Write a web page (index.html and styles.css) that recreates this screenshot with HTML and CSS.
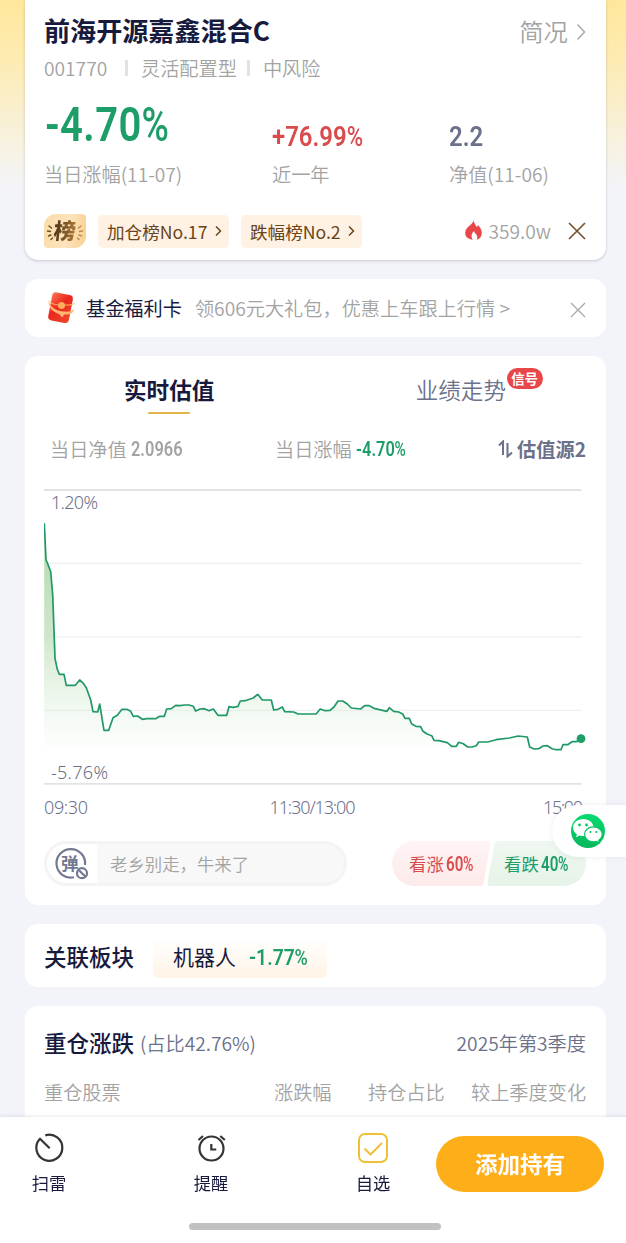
FILE: index.html
```html
<!DOCTYPE html>
<html lang="zh-CN">
<head>
    <meta charset="UTF-8">
    <meta name="viewport" content="width=device-width, initial-scale=1.0">
    <title>前海开源嘉鑫混合C</title>
    <link rel="stylesheet" href="styles.css">
</head>
<body>
    <main class="page">
        <section class="card fund">
            <div class="fund-head">
                <h1>前海开源嘉鑫混合C</h1>
                <div class="profile">简况
                    <svg width="10" height="18" viewBox="0 0 10 18"><path d="M1.5 1.5 8.5 9l-7 7.5" fill="none" stroke="#a9a9a9" stroke-width="1.5"/></svg>
                </div>
            </div>
            <div class="meta"><span class="code">001770</span><i></i><span>灵活配置型</span><i></i><span>中风险</span></div>
            <div class="stats">
                <div class="stat">
                    <div class="value"><span class="num num-big green">-4.70<small>%</small></span></div>
                    <div class="label">当日涨幅(11-07)</div>
                </div>
                <div class="stat">
                    <div class="value"><span class="num num-mid red">+76.99<small>%</small></span></div>
                    <div class="label">近一年</div>
                </div>
                <div class="stat">
                    <div class="value"><span class="num num-mid slate">2.2</span></div>
                    <div class="label">净值(11-06)</div>
                </div>
            </div>
            <div class="ranks">
                <div class="rank-logo">
                    <svg class="rays" width="42" height="34" viewBox="0 0 42 34" fill="none" stroke-width="1.4" stroke-linecap="round">
                        <path stroke="#6d4a20" d="m5 12 2.500 2M3.500 17l3 .5M4.500 22l2.500-1M7 25.500l1.500-1.500"/>
                        <path stroke="#bd8a49" d="m37 12-2.500 2M38.500 17l-3 .5M37.500 22l-2.500-1M35 25.500 33.500 24"/>
                    </svg>
                    <b>榜</b>
                </div>
                <div class="rank rank-up">加仓榜No.17
                    <svg width="7" height="12" viewBox="0 0 7 12"><path d="m1 1.500 4.500 4.500L1 10.500" fill="none" stroke="#6a4518" stroke-width="1.5"/></svg>
                </div>
                <div class="rank rank-down">跌幅榜No.2
                    <svg width="7" height="12" viewBox="0 0 7 12"><path d="m1 1.500 4.500 4.500L1 10.500" fill="none" stroke="#6a4518" stroke-width="1.5"/></svg>
                </div>
                <div class="heat">
                    <svg width="17" height="20" viewBox="0 0 17 20"><path fill="#e84648" d="M8.500.3c.5 3.400 2.300 4.400 3.200 6.700.8-.5 1-1.300 1.200-2.100 2.300 2.400 3.900 5 3.900 8 0 3.700-2.200 6-5.100 6.800 1-2 .7-4-.6-5.500-.9-1-1.800-1.700-2-3.200-1.700 1.300-2.100 2.600-2.400 3.800-.3 2 0 3.500 1.100 4.900C4 19.300.2 17.300.2 13c0-3 1.800-5 3.700-6.700C5.900 4.500 7.900 3.200 8.500.3z"/></svg>
                    <span>359.0w</span>
                </div>
                <svg class="close" width="18" height="18" viewBox="0 0 18 18"><path d="m1 1 16 16M17 1 1 17" stroke="#76532d" stroke-width="1.7"/></svg>
            </div>
        </section>

        <section class="card welfare">
            <svg class="packet" width="30" height="34" viewBox="0 0 30 34">
                <defs>
                    <linearGradient id="packet" x1="0" y1="0" x2="1" y2="1">
                        <stop offset="0" stop-color="#ff7654"/>
                        <stop offset=".45" stop-color="#e9281d"/>
                        <stop offset="1" stop-color="#ef4a2c"/>
                    </linearGradient>
                </defs>
                <g transform="rotate(11 15 17)">
                    <rect x="4" y="2.500" width="21" height="28.500" rx="4" fill="url(#packet)"/>
                </g>
                <path d="M2.500 9.500C4 16 9 19.500 17 20.500c6 .5 9.500-.5 11-2.500-.5 4.500-4.500 6-10 5.500l-1.500 3-3.500-3.500C7 21 2 16.500 2.500 9.500z" fill="#ffb574"/>
                <path d="M3 9.500c3 4 7 4.500 12 4.500 6 0 10 .5 13.500-1.500" fill="none" stroke="#ffbc69"/>
                <circle cx="15.500" cy="14.500" r="3.500" fill="#ffae5d"/>
            </svg>
            <span class="welfare-name">基金福利卡</span>
            <span class="welfare-text">领606元大礼包，优惠上车跟上行情 &gt;</span>
            <svg class="close" width="16" height="16" viewBox="0 0 16 16"><path d="m1 1 14 14M15 1 1 15" stroke="#a9a9a9" stroke-width="1.3"/></svg>
        </section>

        <section class="card trend">
            <div class="tabs">
                <div class="tab active">实时估值</div>
                <div class="tab">业绩走势<span class="signal">信号</span></div>
            </div>
            <div class="quote">
                <div>当日净值 <span class="num num-sm net">2.0966</span></div>
                <div class="quote-rate">当日涨幅 <span class="num num-sm rate green">-4.70<small>%</small></span></div>
                <div class="source">
                    <svg width="16" height="18" viewBox="0 0 16 18"><path d="m1 5.500 4-4V15M9.500 3v13.500l4.500-4" fill="none" stroke="#6b718a" stroke-width="2"/></svg>
                    估值源2
                </div>
            </div>
            <svg class="chart" width="544" height="336" viewBox="44 484 544 336">
                <defs>
                    <linearGradient id="area" gradientUnits="userSpaceOnUse" x1="0" y1="523" x2="0" y2="750">
                        <stop offset="0" stop-color="#acd9a6"/>
                        <stop offset=".5" stop-color="#c9e4c5" stop-opacity=".9"/>
                        <stop offset="1" stop-color="#e8f5e8" stop-opacity=".1"/>
                    </linearGradient>
                </defs>
                <path d="M44 563.300h537.500M44 636.800h537.500M44 710.300h537.500" stroke="#eeeff1" stroke-width="1.300"/>
                <path d="M44 490h537.500M44 783.800h537.500" stroke="#e2e3e5" stroke-width="1.800"/>
                <path id="area-shape" fill="url(#area)"/>
                <polyline id="line" fill="none" stroke="#219867" stroke-width="1.700" stroke-linejoin="round"/>
                <circle cx="581" cy="738.700" r="4.400" fill="#1d9d68"/>
                <g class="axis">
                    <text x="51" y="509" textLength="47">1.20%</text>
                    <text x="51" y="778.500" textLength="57">-5.76%</text>
                    <text x="44" y="813.500" textLength="44">09:30</text>
                    <text x="269.500" y="813.500" textLength="86">11:30/13:00</text>
                    <text x="543" y="813.500" textLength="40">15:00</text>
                </g>
            </svg>
            <div class="chat">
                <div class="danmu">
                    <div class="danmu-switch">
                        <svg width="36" height="34" viewBox="0 0 36 34" fill="none" stroke="#737991" stroke-width="2.200">
                            <path d="M20 30.300A14.300 14.300 0 1 1 31 18"/>
                            <circle cx="28" cy="26.200" r="5"/>
                            <path d="m24.700 23 6.600 6.500"/>
                            <text x="7" y="22.500">弹</text>
                        </svg>
                    </div>
                    <span>老乡别走，牛来了</span>
                </div>
                <div class="vote">
                    <svg class="vote-bg" width="194" height="45" viewBox="0 0 194 45">
                        <defs>
                            <linearGradient id="up" x2="0" y2="1"><stop stop-color="#fff4f4"/><stop offset="1" stop-color="#fdeaea"/></linearGradient>
                            <linearGradient id="down" x2="0" y2="1"><stop stop-color="#f0f7f0"/><stop offset="1" stop-color="#e6f3e8"/></linearGradient>
                        </defs>
                        <path d="M22.500 0H96q3 0 2.500 3l-7 39q-.5 3-3.500 3H22.500a22.500 22.500 0 0 1 0-45z" fill="url(#up)"/>
                        <path d="M106 0h65.500a22.500 22.500 0 0 1 0 45H98q-3 0-2.500-3l7-39q.5-3 3.500-3z" fill="url(#down)"/>
                    </svg>
                    <div class="red">看涨<span class="num num-vote">60<small>%</small></span></div>
                    <div class="green">看跌<span class="num num-vote">40<small>%</small></span></div>
                </div>
            </div>
        </section>

        <section class="card sector">
            <h2>关联板块</h2>
            <div class="sector-tag">机器人<span class="num num-sector green">-1.77<small>%</small></span></div>
        </section>

        <section class="card holdings">
            <div class="holdings-head">
                <h2>重仓涨跌</h2>
                <span class="ratio">(占比42.76%)</span>
                <span class="quarter">2025年第3季度</span>
            </div>
            <div class="columns">
                <span>重仓股票</span><span>涨跌幅</span><span>持仓占比</span><span>较上季度变化</span>
            </div>
        </section>
    </main>

    <div class="share">
        <svg width="34" height="34" viewBox="0 0 34 34">
            <defs><linearGradient id="wx" x2="0" y2="1"><stop stop-color="#08dc70"/><stop offset="1" stop-color="#07b65c"/></linearGradient></defs>
            <circle cx="17" cy="17" r="17" fill="url(#wx)"/>
            <path d="M12.300 5C6.500 5 2 8.800 2 13.600c0 2.800 1.500 5.200 3.900 6.700l-.8 3 3.500-1.800c1.200.4 2.400.6 3.700.6C18 22.100 22.500 18.400 22.500 13.600S18 5 12.300 5z" fill="#fff"/>
            <path d="M22.400 12.800c-4.900 0-8.800 3.300-8.800 7.500s3.900 7.500 8.800 7.500c1.100 0 2.100-.2 3-.5l3 1.500-.7-2.600c2.200-1.400 3.500-3.500 3.500-5.900 0-4.200-3.900-7.500-8.800-7.500z" fill="#fff" stroke="#07c865" stroke-width="1.200"/>
            <g fill="#07c865"><circle cx="8.500" cy="11" r="1.400"/><circle cx="15.500" cy="11" r="1.400"/><circle cx="19.500" cy="18" r="1.100"/><circle cx="25.300" cy="18" r="1.100"/></g>
        </svg>
    </div>

    <footer class="bottom">
        <nav>
            <div class="nav-item nav-scan">
                <svg width="32" height="32" viewBox="0 0 32 32" fill="none" stroke="#343434" stroke-width="2.200"><path d="M12.300 3.400A13 13 0 1 1 7 6.700l9.700 9.500" stroke-linejoin="round"/></svg>
                <span>扫雷</span>
            </div>
            <div class="nav-item nav-remind">
                <svg width="32" height="32" viewBox="0 0 32 32" fill="none" stroke="#343434" stroke-width="2.200"><circle cx="16.500" cy="16.500" r="12"/><path d="M16.300 12v5.500h5M3.500 8 8 4M29.800 8l-4.500-4"/></svg>
                <span>提醒</span>
            </div>
            <div class="nav-item nav-fav">
                <svg width="32" height="32" viewBox="0 0 32 32" fill="none" stroke="#efc037" stroke-width="2"><rect x="2" y="2" width="28" height="28" rx="6"/><path d="m7.500 16.500 6 6L25 11"/></svg>
                <span>自选</span>
            </div>
        </nav>
        <button class="add">添加持有</button>
        <div class="home-bar"></div>
    </footer>

    <script src="chart.js"></script>
</body>
</html>
```
FILE: chart.js
```js
// intraday estimate, x/y in chart units
const points = [
    [44.3,523.3],[46,560],[47.3,562.7],[50.7,571.7],[52.7,595],[55,658.3],[57.3,669.3],[59.3,674.3],[64,674.3],
    [66.3,685.3],[75.3,685.3],[79.7,680],[83.3,683.3],[86.3,687.7],[90.7,700],[93,711.7],[97.7,712],[99.7,704],
    [104,730.3],[108.7,730.3],[113,717.7],[117.3,715.3],[122,709.3],[126.7,709.3],[130.7,711.3],[133.3,716.3],
    [137.7,716],[142.3,719.3],[146.7,718.7],[155.7,718.7],[159.7,716.3],[164.3,716.3],[166.7,709],[171.3,708.7],
    [175.7,705.3],[180,705.7],[184.3,705],[189,705],[193.3,706.3],[195.7,711],[200,709],[204.3,708.7],[209,710.7],
    [213.3,709],[218,715.3],[226.7,715.3],[229,706.7],[233.3,707.3],[238,706.3],[240.3,701],[245,700.7],
    [253.3,698],[257.7,694.3],[262.3,700],[271.3,700],[273.7,710],[278,709.3],[282.3,707],[284.7,711.7],
    [293.7,712],[298,714],[316,714],[320.3,709],[325,710.7],[330,710.3],[334,707],[338,701],[342.7,701],
    [347.3,704],[351.3,708],[360.7,709],[364.7,705.7],[369.3,705.7],[374,708.3],[387,711.3],[389.3,707.7],
    [393.7,711.3],[398.7,712],[402.7,714],[405,718.3],[409.3,718.3],[411.7,724],[416,726.3],[420.7,726.7],
    [423,731.3],[427,734],[431.7,735.7],[434,740.3],[438.7,740.7],[447.3,742.7],[451.7,746.3],[456.3,746.3],
    [458.7,742.3],[463.3,743.7],[467.7,747],[472,747],[476.3,745.7],[478.7,742],[487.7,742],[496,739.7],
    [509.3,738],[518.3,736],[527.3,737],[529.7,747],[534,749],[538.7,748.7],[543,746],[547.3,745.7],[552,748.7],
    [556,749.7],[561,749.7],[563,744.7],[567.7,744.7],[572,741.7],[576.3,741.7],[581,738.7]
];

const line = points.map(p => p.join(',')).join(' ');
document.getElementById('line').setAttribute('points', line);
document.getElementById('area-shape').setAttribute('d', `M44,746 L${line} L581,746 Z`);
```
FILE: styles.css
```css
* {
    box-sizing: border-box;
}

body {
    margin: 0;
    height: 1243px;
    overflow: hidden;
    background: linear-gradient(#ffe79b 0, #fdebb2 60px, #f8f1d9 130px, #f3f4fa 190px) #f3f4fa;
    color: #171a3d;
    font-family: "Noto Sans CJK SC", sans-serif;
    font-size: 19.2px;
    font-weight: 350;
}

svg {
    display: block;
    flex: none;
}

h1,
h2 {
    margin: 0;
}

h2 {
    font-size: 22.5px;
    font-weight: 500;
    line-height: 30px;
    padding-bottom: 2px;
}

.page {
    width: 581px;
    margin-left: 24.5px;
    display: flex;
    flex-direction: column;
    gap: 19px;
}

.card {
    background: #fff;
    border-radius: 13px;
    padding: 0 19.5px;
}

.green { color: #1d9d68; }
.red { color: #d94c4e; }
.slate { color: #6b718a; }

/* condensed figures */
.num {
    display: inline-block;
    font-family: Roboto, sans-serif;
    font-weight: 600;
    white-space: nowrap;
    transform-origin: 0 50%;
}

.num small {
    display: inline-block;
    font-size: 1em;
    font-weight: 500;
    transform: scaleX(0.93);
    transform-origin: 0 50%;
}

/* Fund summary */
.fund {
    height: 260px;
    border-radius: 0 0 13px 13px;
    box-shadow: 0 1px 3px rgba(60, 65, 90, 0.25);
}

.fund-head {
    display: flex;
    justify-content: space-between;
    align-items: center;
    height: 50px;
    padding-top: 10px;
}

h1 {
    font-size: 26.1px;
    font-weight: 700;
    line-height: 38px;
}

.profile {
    display: flex;
    align-items: center;
    gap: 8px;
    font-size: 24.4px;
    color: #a3a3a3;
}

.profile svg {
    margin-top: 3px;
}

.meta {
    display: flex;
    align-items: center;
    height: 35px;
    margin-bottom: 2px;
    color: #a3a3a3;
}

.meta i {
    width: 3px;
    height: 16px;
    margin: 0 13px 0 10px;
    background: #e2e2e2;
}

.code {
    width: 71px;
}

.stats {
    display: grid;
    grid-template-columns: 228px 177px 1fr;
    height: 114px;
}

.value {
    display: flex;
    align-items: flex-end;
    height: 73px;
    line-height: 1;
}

.num-big {
    width: 124px;
    font-size: 48.5px;
    margin: 0 0 11px 1px;
    letter-spacing: 0.5px;
    transform: scaleX(0.825);
}

.num-mid {
    font-size: 28.5px;
    margin-bottom: 9px;
    transform: scaleX(0.84);
}

.label {
    line-height: 28px;
    color: #a3a3a3;
}

.ranks {
    display: flex;
    align-items: center;
    height: 60px;
}

.rank-logo {
    position: relative;
    width: 42px;
    height: 34px;
    border-radius: 12px 4px 12px 4px;
    background: linear-gradient(100deg, #fbdcaa 0, #fde4bd 55%, #f9cf90 100%);
    text-align: center;
}

.rays {
    position: absolute;
    inset: 0;
}

.rank-logo b {
    display: block;
    font-size: 22px;
    font-weight: 900;
    line-height: 31px;
    color: transparent;
    background: linear-gradient(90deg, #4e3519 25%, #ac7735 75%);
    background-clip: text;
    -webkit-background-clip: text;
    transform: skewX(-6deg);
}

.rank {
    display: flex;
    align-items: center;
    justify-content: space-between;
    height: 33px;
    margin-left: 12px;
    padding: 0 7px 0 9px;
    border-radius: 5px;
    background: #fff2e4;
    color: #6a4518;
    font-size: 17.6px;
    font-weight: 400;
}

.rank-up { width: 131px; }
.rank-down { width: 121px; }

.heat {
    display: flex;
    align-items: center;
    gap: 7px;
    margin-left: auto;
    color: #a3a3a3;
}

.heat svg {
    margin-bottom: 2px;
}

.ranks .close {
    margin-left: 17px;
}

/* Welfare notice */
.welfare {
    display: flex;
    align-items: center;
    height: 58px;
}

.packet {
    margin: 0 10px 0 2px;
}

.welfare-name {
    margin-right: 13px;
    font-weight: 400;
}

.welfare-text {
    color: #a3a3a3;
}

.welfare .close {
    margin: 4px 0 0 auto;
}

/* Estimate chart */
.trend {
    height: 549px;
}

.tabs {
    display: flex;
    justify-content: space-between;
    height: 70px;
    padding: 0 80px;
}

.tab {
    position: relative;
    font-size: 22.6px;
    line-height: 68px;
    color: #6b718a;
}

.tab.active {
    font-weight: 700;
    color: #171a3d;
}

.tab.active::after {
    content: "";
    position: absolute;
    left: 24px;
    bottom: 12px;
    width: 42px;
    height: 2px;
    border-radius: 2px;
    background: #dfb347;
}

.signal {
    position: absolute;
    left: 91px;
    top: 12px;
    width: 36px;
    height: 21px;
    border-radius: 11px;
    background: #e84648;
    color: #fff;
    font-size: 13.5px;
    font-weight: 700;
    line-height: 20px;
    text-align: center;
}

.quote {
    display: grid;
    grid-template-columns: 225px 1fr auto;
    align-items: center;
    height: 46px;
    padding-left: 6px;
    color: #a3a3a3;
}

.num-sm {
    position: relative;
    top: -1.5px;
    font-size: 20px;
    transform: scaleX(0.82);
}

.source {
    display: flex;
    align-items: center;
    gap: 3px;
    color: #6b718a;
    font-weight: 700;
}

.chart {
    margin-top: 12px;
}

.axis text {
    font-family: "Noto Sans", sans-serif;
    font-size: 18px;
    font-weight: 350;
    fill: #6b718a;
}

.chat {
    display: flex;
    justify-content: space-between;
    margin-top: 21px;
    font-size: 17.4px;
}

.danmu {
    display: flex;
    align-items: center;
    gap: 13px;
    width: 303px;
    height: 45px;
    overflow: hidden;
    border: 3px solid #f4f4f4;
    border-radius: 23px;
    background: #f8f8f8;
    color: #a3a3a3;
}

.danmu-switch {
    width: 50px;
    height: 40px;
    padding: 3px 0 0 7px;
    background: #fff;
}

.danmu-switch text {
    font-size: 17.5px;
    font-weight: 700;
    fill: #737991;
    stroke: none;
}

.vote {
    position: relative;
    display: flex;
    width: 194px;
    line-height: 45px;
    font-weight: 400;
}

.vote-bg {
    position: absolute;
    inset: 0;
}

.vote > div {
    position: relative;
    width: 95px;
    padding-left: 17px;
    white-space: nowrap;
}

.num-vote {
    margin-left: 2px;
    font-size: 20.5px;
    line-height: 1;
    transform: scaleX(0.74);
}

/* Related sector */
.sector {
    display: flex;
    align-items: center;
    gap: 19px;
    height: 63px;
}

.sector h2 {
    padding: 1px 0 0;
}

.sector-tag {
    width: 174px;
    height: 41px;
    margin-top: 3px;
    padding-left: 20px;
    border-radius: 5px;
    background: linear-gradient(#fff, #fff4e6);
    font-size: 21px;
    font-weight: 400;
    line-height: 38px;
    white-space: nowrap;
}

.num-sector {
    margin-left: 13px;
    font-size: 22.5px;
    line-height: 1;
    transform: scaleX(0.86);
}

/* Holdings */
.holdings {
    height: 130px;
}

.holdings-head {
    display: flex;
    align-items: center;
    height: 73px;
    color: #6b718a;
}

.holdings-head h2 {
    color: #171a3d;
}

.ratio {
    margin-left: 6px;
}

.quarter {
    margin-left: auto;
}

.columns {
    display: grid;
    grid-template-columns: 230px 94px 103px 1fr;
    line-height: 26px;
    color: #a3a3a3;
    white-space: nowrap;
}

/* Floating share tab */
.share {
    position: fixed;
    top: 805px;
    right: 0;
    width: 74px;
    height: 52px;
    padding: 9px 0 0 19px;
    border-radius: 26px 0 0 26px;
    background: #fff;
    box-shadow: 0 0 6px rgba(80, 85, 110, 0.1);
}

/* Bottom bar */
.bottom {
    position: fixed;
    left: 0;
    right: 0;
    bottom: 0;
    display: flex;
    flex-wrap: wrap;
    align-content: flex-start;
    justify-content: space-between;
    height: 126px;
    padding: 15px 22px 0 19px;
    background: #fff;
    box-shadow: 0 -1px 3px rgba(60, 65, 90, 0.12);
}

nav {
    display: flex;
    gap: 102px;
}

.nav-item {
    display: flex;
    flex-direction: column;
    align-items: center;
    width: 60px;
    font-size: 17.3px;
    font-weight: 400;
    line-height: 25px;
}

.nav-item span {
    margin-top: 6px;
}

.add {
    width: 168px;
    height: 56px;
    margin-top: 4px;
    padding-bottom: 3px;
    border: 0;
    border-radius: 28px;
    background: #feae18;
    color: #fff;
    font: 700 22.5px "Noto Sans CJK SC", sans-serif;
}

.home-bar {
    flex: none;
    width: 252px;
    height: 7px;
    margin: 28px auto 0 170px;
    border-radius: 4px;
    background: #c1c1c1;
}
```
